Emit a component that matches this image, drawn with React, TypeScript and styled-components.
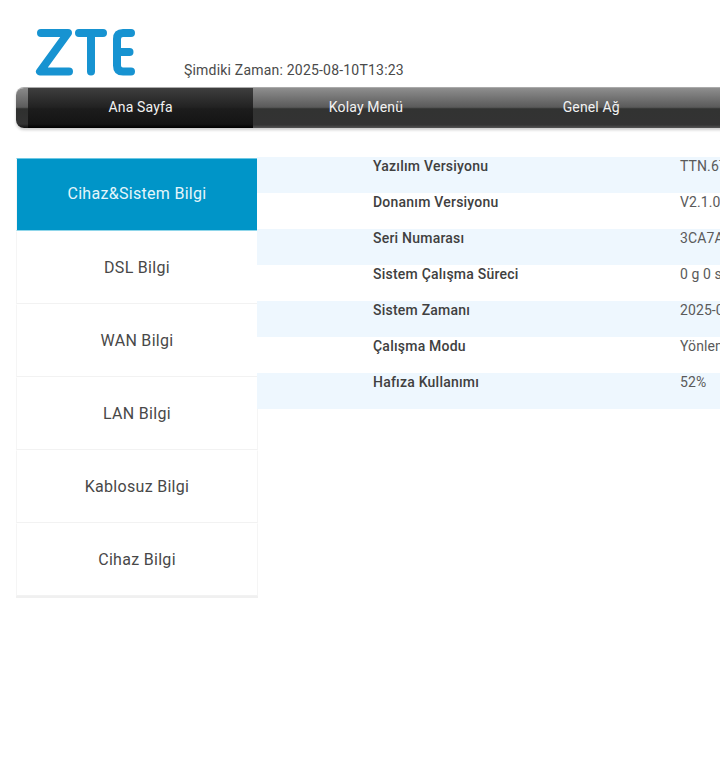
import React from 'react';
import styled, { createGlobalStyle } from 'styled-components';

const GlobalStyle = createGlobalStyle`
  html, body {
    margin: 0;
    padding: 0;
    background: #fff;
    overflow: hidden;
  }
  body {
    font-family: Roboto, "Liberation Sans", sans-serif;
    color: #444;
  }
`;

const tabs = ['Ana Sayfa', 'Kolay Menü', 'Genel Ağ', ''];
const sideItems = ['Cihaz&Sistem Bilgi', 'DSL Bilgi', 'WAN Bilgi', 'LAN Bilgi', 'Kablosuz Bilgi', 'Cihaz Bilgi'];
const rows = [
  ['Yazılım Versiyonu', 'TTN.67'],
  ['Donanım Versiyonu', 'V2.1.0'],
  ['Seri Numarası', '3CA7A'],
  ['Sistem Çalışma Süreci', '0 g 0 s'],
  ['Sistem Zamanı', '2025-08-10T13:23'],
  ['Çalışma Modu', 'Yönlendirme'],
  ['Hafıza Kullanımı', '52%'],
];

const Logo = () => (
  <LogoSvg viewBox="0 0 100 48" aria-label="ZTE">
    <g fill="none" stroke="#1793d1" strokeWidth="8" strokeLinecap="round" strokeLinejoin="round">
      <path d="M6 5H33L5 43.5H34" />
      <path d="M44 5H68M56 5V43.5" />
      <path d="M96 5H88Q82 5 82 11V37.5Q82 43.5 88 43.5H96M82 24H94.5" />
    </g>
  </LogoSvg>
);

export default function App() {
  return (
    <Page>
      <GlobalStyle />
      <Header>
        <Logo />
        <CurrentTime>Şimdiki Zaman: 2025-08-10T13:23</CurrentTime>
      </Header>
      <NavBar>
        <NavCap />
        {tabs.map((t, i) => (
          <NavTab key={i} $active={i === 0}>{t}</NavTab>
        ))}
      </NavBar>
      <Main>
        <SideMenu>
          {sideItems.map((s, i) => (
            <SideItem key={s} $active={i === 0}>{s}</SideItem>
          ))}
        </SideMenu>
        <InfoTable>
          {rows.map(([label, value], i) => (
            <InfoRow key={label} $shaded={i % 2 === 0}>
              <InfoLabel>{label}</InfoLabel>
              <InfoValue>{value}</InfoValue>
            </InfoRow>
          ))}
        </InfoTable>
      </Main>
    </Page>
  );
}

const Page = styled.div`
  width: 720px;
  height: 773px;
  overflow: hidden;
  padding-left: 16px;
  box-sizing: border-box;
`;

const Header = styled.div`
  height: 87px;
  display: flex;
  align-items: flex-start;
`;

const LogoSvg = styled.svg`
  width: 100px;
  height: 48px;
  margin: 28px 0 0 19px;
  flex: none;
`;

const CurrentTime = styled.div`
  margin: 61px 0 0 49px;
  font-size: 14px;
  line-height: 18px;
  letter-spacing: 0.2px;
  color: #4a4a4a;
  white-space: nowrap;
`;

const NavBar = styled.div`
  width: 960px;
  height: 41px;
  display: flex;
  border-radius: 8px 0 0 8px;
  overflow: hidden;
  border-top: 1px solid #aaa;
  box-sizing: border-box;
  box-shadow: 0 2px 3px rgba(0, 0, 0, 0.2);
`;

const NavCap = styled.div`
  width: 12px;
  flex: none;
  background: linear-gradient(#8a8a8a, #5c5c5c 48%, #2f302f 52%, #333 90%, #111);
`;

const NavTab = styled.div<{ $active: boolean }>`
  width: 225.3px;
  flex: none;
  display: flex;
  align-items: center;
  justify-content: center;
  padding-bottom: 2px;
  box-sizing: border-box;
  font-size: 14px;
  letter-spacing: 0.15px;
  color: #f2f2f2;
  background: ${(p) =>
    p.$active
      ? 'linear-gradient(#3e3e3e, #222 48%, #1c1c1c 52%, #141414 90%, #000)'
      : 'linear-gradient(#8e8e8e, #5a5a5a 48%, #323332 52%, #333 92%, #555)'};
`;

const Main = styled.div`
  display: flex;
  align-items: flex-start;
  margin-top: 29px;
`;

const SideMenu = styled.div`
  width: 242px;
  flex: none;
  margin: 1px 0 0 0;
  box-sizing: border-box;
  border-bottom: 2px solid #f0f0f0;
`;

const SideItem = styled.div<{ $active: boolean }>`
  height: 73px;
  display: flex;
  align-items: center;
  justify-content: center;
  box-sizing: border-box;
  padding-bottom: ${(p) => (p.$active ? '2px' : '0')};
  font-size: 16px;
  letter-spacing: 0.3px;
  color: ${(p) => (p.$active ? '#e4f6fb' : '#484848')};
  background: ${(p) => (p.$active ? '#0095c8' : '#fff')};
  border-top: 1px solid ${(p) => (p.$active ? '#6cc8e4' : 'transparent')};
  border-left: 1px solid #f5f5f5;
  border-right: 1px solid #f5f5f5;
  border-bottom: 1px solid ${(p) => (p.$active ? '#8fd6ea' : '#f2f2f2')};
`;

const InfoTable = styled.div`
  flex: none;
  width: 500px;
  margin-left: -1px;
`;

const InfoRow = styled.div<{ $shaded: boolean }>`
  height: 36px;
  display: flex;
  padding-left: 116px;
  box-sizing: border-box;
  font-size: 14px;
  line-height: 19px;
  white-space: nowrap;
  background: ${(p) => (p.$shaded ? '#eef7fe' : '#fff')};
`;

const InfoLabel = styled.div`
  width: 307px;
  flex: none;
  font-weight: 500;
  letter-spacing: 0.22px;
  color: #404040;
`;

const InfoValue = styled.div`
  letter-spacing: 0.1px;
  color: #5a5a5a;
`;
